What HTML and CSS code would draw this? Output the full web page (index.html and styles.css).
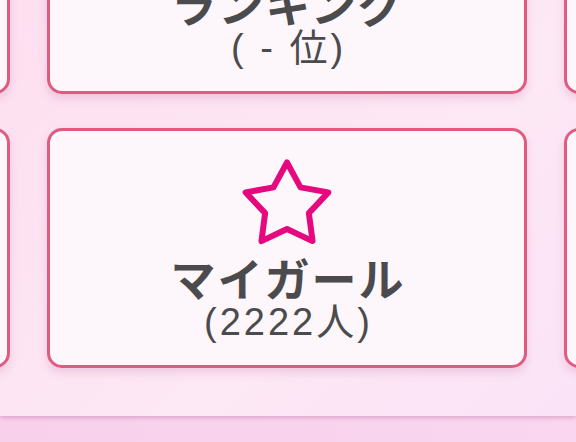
FILE: index.html
```html
<!DOCTYPE html>
<html lang="ja">
<head>
<meta charset="utf-8">
<link rel="stylesheet" href="styles.css">
</head>
<body>
<div class="panel">
  <div class="grid">
    <div class="card"></div>
    <div class="card">
      <div class="icon-space"></div>
      <div class="title">ランキング</div>
      <div class="sub">( - 位)</div>
    </div>
    <div class="card"></div>
    <div class="card"></div>
    <div class="card">
      <svg class="icon" width="94" height="88" viewBox="0 0 94 88">
        <polygon points="47,4.5 60.52,29.39 88.35,34.4 68.87,55.11 72.56,83.1 47,71 21.44,83.1 25.13,55.11 5.65,34.4 33.48,29.39" fill="none" stroke="#e5097f" stroke-width="6" stroke-linejoin="round"/>
      </svg>
      <div class="title">マイガール</div>
      <div class="sub">(2222人)</div>
    </div>
    <div class="card"></div>
  </div>
</div>
<div class="strip"></div>
</body>
</html>
```
FILE: styles.css
```css
html, body {
  margin: 0;
  padding: 0;
}
body {
  width: 576px;
  height: 442px;
  overflow: hidden;
  background: #f9d3ee;
  font-family: "Noto Sans CJK JP", "Noto Sans", sans-serif;
}
.panel {
  height: 416px;
  overflow: hidden;
  background: linear-gradient(135deg, #fddff0 0%, #fde8f5 60%, #fbe3f7 100%);
  box-shadow: 0 2px 4px rgba(170, 90, 140, 0.35);
  position: relative;
  z-index: 1;
}
.grid {
  display: grid;
  grid-template-columns: repeat(3, 480px);
  grid-auto-rows: 240px;
  column-gap: 37px;
  row-gap: 34px;
  margin-left: -470px;
  margin-top: -146px;
}
.card {
  box-sizing: border-box;
  border: 3px solid #df5b80;
  border-radius: 15px;
  background: #fdf6fb;
  box-shadow: 0 5px 9px rgba(190, 100, 150, 0.22);
  display: flex;
  flex-direction: column;
  align-items: center;
  padding-top: 27px;
  color: #4b4a4d;
}
.icon, .icon-space {
  width: 94px;
  height: 88px;
  flex: none;
}
.title {
  font-size: 45px;
  font-weight: 700;
  line-height: 52px;
  margin-top: 6px;
  letter-spacing: 2px;
  padding-left: 2px;
}
.sub {
  font-family: "Liberation Sans", "Noto Sans CJK JP", sans-serif;
  font-size: 38px;
  line-height: 36px;
  letter-spacing: 3px;
  padding-left: 3px;
}
.strip {
  height: 26px;
  background: linear-gradient(90deg, #f8d0ec, #fad6f0);
}
```
